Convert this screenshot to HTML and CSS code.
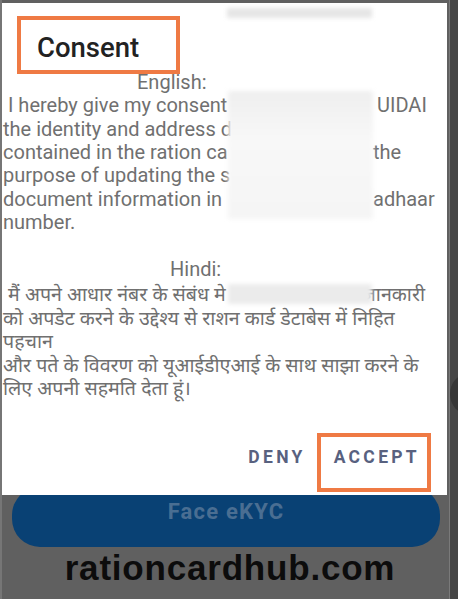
FILE: index.html
```html
<!DOCTYPE html>
<html lang="en">
<head>
<meta charset="utf-8">
<title>Consent</title>
<link rel="stylesheet" href="styles.css">
</head>
<body>
<div class="screen">
  <div class="page">
    <div class="page-main">
      <div class="face-btn">Face eKYC</div>
      <div class="watermark">rationcardhub.com</div>
    </div>
    <div class="edge"><span class="edge-knob"></span></div>
  </div>

  <div class="dialog">
    <div class="blur blur-top"></div>
    <h2 class="title">Consent</h2>
    <div class="body">
      <div class="label label-en">English:</div>
      <div class="line"><span class="c1">&nbsp;I hereby give my consent</span><span></span><span class="c3 pad4">UIDAI</span></div>
      <div class="line"><span class="c1">the identity and address d</span><span></span><span></span></div>
      <div class="line"><span class="c1">contained in the ration ca</span><span></span><span class="c3">the</span></div>
      <div class="line"><span class="c1">purpose of updating the s</span><span></span><span></span></div>
      <div class="line"><span class="c1">document information in</span><span></span><span class="c3">adhaar</span></div>
      <div class="line"><span class="c1">number.</span></div>
      <div class="line blank">&nbsp;</div>
      <div class="label label-hi">Hindi:</div>
      <div class="hindi">
        <div class="line hline"><span class="c1">&nbsp;मैं अपने आधार नंबर के संबंध मे</span><span></span><span class="c3 hi-end">जानकारी</span></div>
        <div class="hline">को अपडेट करने के उद्देश्य से राशन कार्ड डेटाबेस में निहित</div>
        <div class="hline">पहचान</div>
        <div class="hline">और पते के विवरण को यूआईडीएआई के साथ साझा करने के</div>
        <div class="hline">लिए अपनी सहमति देता हूं।</div>
      </div>
    </div>
    <div class="blur blur-en"></div>
    <div class="blur blur-hi"></div>
    <div class="actions">
      <span class="action">DENY</span>
      <span class="action">ACCEPT</span>
    </div>
    <div class="mark mark-title"></div>
    <div class="mark mark-accept"></div>
  </div>
</div>
</body>
</html>
```
FILE: styles.css
```css
html, body {
  margin: 0;
  padding: 0;
}
body {
  background: #5f5f5f;
  font-family: Roboto, "Noto Sans", "Liberation Sans", sans-serif;
}
.screen {
  position: relative;
  width: 458px;
  height: 599px;
  overflow: hidden;
  background: #606060;
}
.page {
  display: flex;
  height: 100%;
}
.page-main {
  width: 449px;
  display: flex;
  flex-direction: column;
  align-items: center;
  padding-top: 487px;
  box-sizing: border-box;
  background: linear-gradient(to right, #767676 0, #767676 2px, #606060 2px);
}
.edge {
  position: relative;
  flex: 1;
  background: #464646;
  border-left: 1px solid #7a7a7a;
}
.edge-knob {
  position: absolute;
  left: 0;
  top: 374px;
  width: 36px;
  height: 40px;
  border-radius: 50%;
  background: #363636;
}
.face-btn {
  align-self: flex-start;
  margin-left: 12px;
  width: 428px;
  height: 60px;
  border-radius: 28px;
  background: #094174;
  color: #4a6e92;
  font-weight: 700;
  font-size: 22px;
  letter-spacing: 1.2px;
  display: flex;
  align-items: center;
  justify-content: center;
  box-sizing: border-box;
  padding-bottom: 12px;
}
.watermark {
  margin-top: 1px;
  padding-left: 11px;
  font-family: "Liberation Sans", Arial, sans-serif;
  font-weight: 700;
  font-size: 35px;
  letter-spacing: 0.8px;
  line-height: 40px;
  color: #0c0c0c;
}

.dialog {
  position: absolute;
  left: 2px;
  top: 3px;
  width: 445px;
  height: 492px;
  background: #ffffff;
  display: flex;
  flex-direction: column;
  padding-left: 1px;
  box-sizing: border-box;
}
.title {
  margin: 30px 0 8px 34px;
  height: 30px;
  line-height: 30px;
  font-size: 27.5px;
  font-weight: 500;
  color: #222222;
}
.body {
  font-size: 20px;
  line-height: 23.33px;
  color: #707070;
}
.label-en {
  padding-left: 134px;
}
.label-hi {
  padding-left: 167px;
}
.line {
  display: grid;
  grid-template-columns: 226px 144px 1fr;
  white-space: nowrap;
}
.pad4 {
  padding-left: 4px;
}
.hindi {
  font-family: "Noto Sans Devanagari", "Lohit Devanagari", "FreeSans", "Noto Sans", sans-serif;
  font-size: 19.6px;
  padding-top: 4px;
}
.hline {
  line-height: 23.6px;
  white-space: nowrap;
}
.hi-end {
  margin-left: -30px;
  text-align: right;
  padding-right: 22px;
}
.blur {
  position: absolute;
  filter: blur(2px);
}
.blur-top {
  left: 225px;
  top: 5px;
  width: 145px;
  height: 10px;
  background: #e6e6e6;
}
.blur-en {
  left: 226px;
  top: 88px;
  width: 145px;
  height: 128px;
  background: linear-gradient(#efefef, #f8f8f8 40%, #f5f5f5);
}
.blur-hi {
  left: 226px;
  top: 281px;
  width: 144px;
  height: 20px;
  background: #ebebeb;
}
.actions {
  margin-top: auto;
  margin-bottom: 20px;
  display: flex;
  justify-content: flex-end;
  gap: 28px;
  padding-right: 27px;
  height: 36px;
  line-height: 36px;
}
.action {
  font-size: 17.5px;
  font-weight: 700;
  letter-spacing: 3.3px;
  color: #58617f;
}
.mark {
  position: absolute;
  border: 4px solid #ef7a44;
  box-sizing: border-box;
}
.mark-title {
  left: 15px;
  top: 13px;
  width: 163px;
  height: 58px;
}
.mark-accept {
  left: 315px;
  top: 430px;
  width: 114px;
  height: 59px;
}
```
